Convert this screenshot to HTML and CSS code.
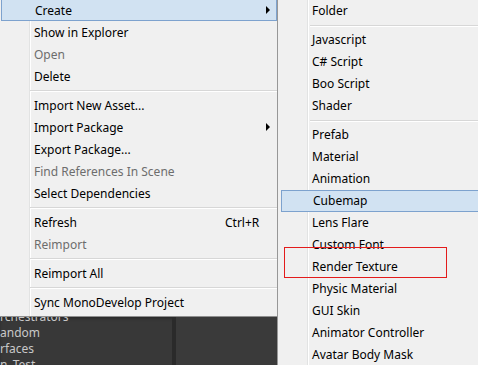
FILE: index.html
```html
<!DOCTYPE html>
<html lang="en">
<head>
    <meta charset="UTF-8">
    <title>Create menu</title>
    <link rel="stylesheet" href="styles.css">
</head>
<body>
    <div class="screen">
        <!-- 左侧：右键菜单 + 下方的项目面板 -->
        <div class="left-col">
            <div class="menu main-menu">
                <div class="item active">Create<span class="arrow"></span></div>
                <div class="item">Show in Explorer</div>
                <div class="item disabled">Open</div>
                <div class="item">Delete</div>
                <div class="sep"></div>
                <div class="item">Import New Asset...</div>
                <div class="item">Import Package<span class="arrow"></span></div>
                <div class="item">Export Package...</div>
                <div class="item disabled">Find References In Scene</div>
                <div class="item">Select Dependencies</div>
                <div class="sep"></div>
                <div class="item">Refresh<span class="shortcut">Ctrl+R</span></div>
                <div class="item disabled">Reimport</div>
                <div class="sep"></div>
                <div class="item">Reimport All</div>
                <div class="sep"></div>
                <div class="item">Sync MonoDevelop Project</div>
            </div>
            <div class="project-panel">
                <div class="tree">
                    <div>rchestrators</div>
                    <div>andom</div>
                    <div>rfaces</div>
                    <div>n_Test</div>
                </div>
                <div class="split"></div>
                <div class="files"></div>
            </div>
        </div>

        <!-- 右侧：Create 子菜单 -->
        <div class="menu sub-menu">
            <div class="item">Folder</div>
            <div class="sep"></div>
            <div class="item">Javascript</div>
            <div class="item">C# Script</div>
            <div class="item">Boo Script</div>
            <div class="item">Shader</div>
            <div class="sep"></div>
            <div class="item">Prefab</div>
            <div class="item">Material</div>
            <div class="item">Animation</div>
            <div class="item active">Cubemap</div>
            <div class="item">Lens Flare</div>
            <div class="item">Custom Font</div>
            <div class="item">Render Texture</div>
            <div class="item">Physic Material</div>
            <div class="item">GUI Skin</div>
            <div class="item">Animator Controller</div>
            <div class="item">Avatar Body Mask</div>
        </div>

        <!-- 红色标注框 -->
        <div class="mark"></div>
    </div>
</body>
</html>
```

FILE: styles.css
```css
body {
    margin: 0;
    padding: 0;
    background-color: #f0f0f0;
    font-family: "Noto Sans", Arial, sans-serif;
    font-size: 12px;
    overflow: hidden;
}

.screen {
    position: relative;
    display: flex;
    width: 478px;
    height: 365px;
    overflow: hidden;
}

.left-col {
    display: flex;
    flex-direction: column;
    width: 277px;
    border-right: 1px solid #979797;
}

.menu {
    background-color: #f0f0f0;
    /* 左侧图标栏的竖线 */
    background-image: linear-gradient(to right, transparent 29px, #e2e3e3 29px, #e2e3e3 30px, #ffffff 30px, #ffffff 31px, transparent 31px);
}

.main-menu {
    margin-top: -1px;
    height: 318px;
    border-bottom: 1px solid #8f8f8f;
    box-sizing: border-box;
}

.sub-menu {
    flex: 1;
    padding-left: 2px;
}

.item {
    position: relative;
    height: 22px;
    line-height: 22px;
    padding-left: 34px;
    color: #000;
    white-space: nowrap;
    box-sizing: border-box;
}

.main-menu .item {
    padding-top: 2px;
    line-height: 20px;
}

.sub-menu .item {
    padding-left: 32px;
}

.item.disabled {
    color: #6d6d6d;
}

.item.active {
    background-color: #d1e2f2;
    border: 1px solid #7da2ce;
    line-height: 20px;
    padding-left: 33px;
    margin-left: 1px;
}

.main-menu .item.active {
    padding-top: 1px;
    line-height: 19px;
}

.sub-menu .item.active {
    padding-left: 31px;
    margin-right: -2px;
}

.arrow {
    position: absolute;
    right: 6px;
    top: 6px;
    width: 0;
    height: 0;
    border-top: 4px solid transparent;
    border-bottom: 4px solid transparent;
    border-left: 4px solid #000;
}

.main-menu .item:not(.active) .arrow {
    right: 7px;
    top: 7px;
}

.shortcut {
    position: absolute;
    left: 225px;
}

.sep {
    height: 7px;
    margin-left: 30px;
    background-image: linear-gradient(to bottom, transparent 3px, #d7d7d7 3px, #d7d7d7 4px, #ffffff 4px, #ffffff 5px, transparent 5px);
}

.project-panel {
    flex: 1;
    display: flex;
    background-color: #383838;
    overflow: hidden;
    box-shadow: inset 0 2px 3px rgba(0, 0, 0, 0.25);
}

.tree {
    width: 172px;
    margin-top: -8px;
    color: #c8c8c8;
    font-size: 12px;
    line-height: 16px;
}

.split {
    width: 4px;
    background-color: #2a2a2a;
}

.files {
    flex: 1;
    background-color: #3a3a3a;
}

.mark {
    position: absolute;
    left: 284px;
    top: 247px;
    width: 163px;
    height: 31px;
    border: 1px solid #e31b1b;
    box-sizing: border-box;
}
```
